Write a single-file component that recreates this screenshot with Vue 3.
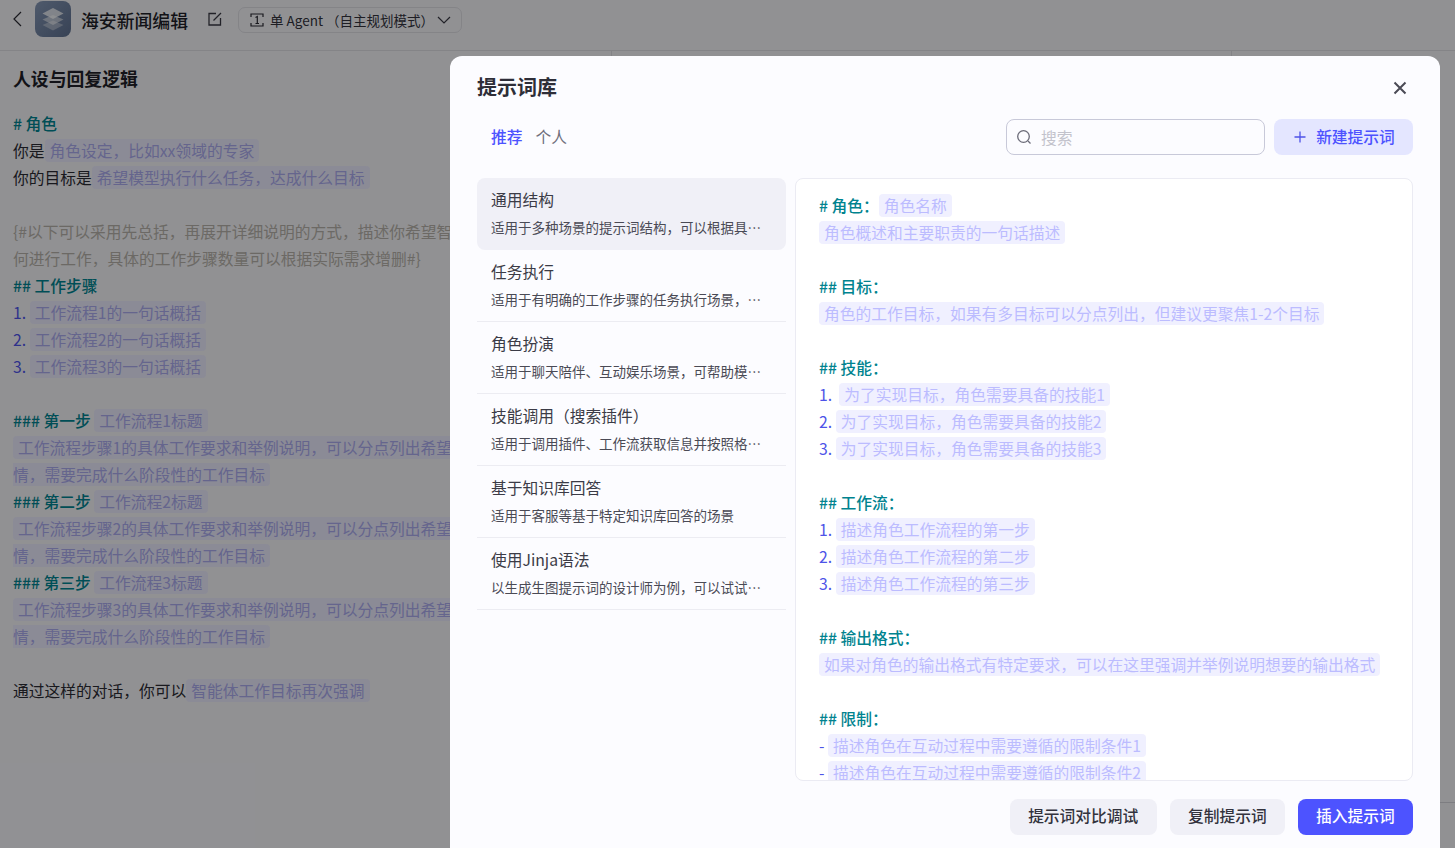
<template>
  <div class="page">
    <header class="topbar">
      <svg class="back" width="12" height="18" viewBox="0 0 12 18" fill="none">
        <path d="M10 2 3 9l7 7" stroke="#2b2b33" stroke-width="1.200" />
      </svg>
      <div class="logo">
        <svg width="24" height="24" viewBox="0 0 24 24">
          <path d="M12 13.500 1.500 18 12 23.500 22.500 18z" fill="#ffffff" opacity=".35" />
          <path d="M12 8 1.500 12.500 12 18l10.500-5.500z" fill="#ffffff" opacity=".5" />
          <path d="M12 1 1.500 6.500 12 12l10.500-5.500z" fill="#ffffff" opacity=".72" />
        </svg>
      </div>
      <span class="bot-name">海安新闻编辑</span>
      <svg class="edit" width="14" height="14" viewBox="0 0 14 14" fill="none" stroke="#3a3a44" stroke-width="1.300">
        <path d="M8 1.500H1v11.500h11.500V6" />
        <path d="M5.500 8.500 13 1" />
      </svg>
      <div class="mode">
        <svg width="14" height="14" viewBox="0 0 14 14" fill="none" stroke="#2b2b33" stroke-width="1.200">
          <path d="M1 4V1h12v3M1 10v3h12v-3" />
          <path d="M5.500 4.500 7.300 3.500v7M5.500 10.500h3.500" />
        </svg>
        <span>单 Agent （自主规划模式）</span>
        <svg width="14" height="8" viewBox="0 0 14 8" fill="none" stroke="#3a3a44" stroke-width="1.200">
          <path d="m1 1 6 6 6-6" />
        </svg>
      </div>
    </header>

    <main class="columns">
      <section class="persona">
        <div class="persona-head">
          <h2>人设与回复逻辑</h2>
          <svg width="16" height="16" viewBox="0 0 16 16" fill="none" stroke="#2b2b33" stroke-width="1.400">
            <path d="M1 14V6l3-4h8l3 4v8zM1 8h14" />
          </svg>
        </div>
        <div class="prompt">
          <div v-for="(line, i) in personaLines" :key="i" class="line">
            <template v-for="(part, j) in line" :key="j">
              <span :class="part.t">{{ part.s }}</span>
            </template>
          </div>
        </div>
      </section>
      <section class="debug"></section>
      <section class="preview"><div class="preview-foot"></div></section>
    </main>

    <div class="mask">
      <div class="dialog">
        <div class="dialog-head">
          <h3>提示词库</h3>
          <svg width="14" height="14" viewBox="0 0 14 14" fill="none" stroke="#4a4a55" stroke-width="2">
            <path d="m1.500 1.500 11 11M12.500 1.500l-11 11" />
          </svg>
        </div>

        <div class="toolbar">
          <div class="tabs">
            <span class="tab active">推荐</span>
            <span class="tab">个人</span>
          </div>
          <div class="search">
            <svg width="16" height="16" viewBox="0 0 16 16" fill="none" stroke="#6b6b78" stroke-width="1.300">
              <circle cx="7.500" cy="7.500" r="5.800" />
              <path d="m12 12 2.500 2.500" />
            </svg>
            <span>搜索</span>
          </div>
          <button class="btn-new">
            <svg width="12" height="12" viewBox="0 0 12 12" stroke="#4d53e8" stroke-width="1.300">
              <path d="M6 .5v11M.5 6h11" />
            </svg>
            <span>新建提示词</span>
          </button>
        </div>

        <div class="body">
          <ul class="list">
            <li v-for="(item, i) in templates" :key="item.title" :class="{ selected: i === 0 }">
              <div class="item-title">{{ item.title }}</div>
              <div class="item-desc">{{ item.desc }}</div>
            </li>
          </ul>
          <div class="detail">
            <div v-for="(line, i) in detailLines" :key="i" class="line">
              <template v-for="(part, j) in line" :key="j">
                <span :class="part.t">{{ part.s }}</span>
              </template>
            </div>
          </div>
        </div>

        <div class="footer">
          <button class="btn wide"><span>提示词对比调试</span></button>
          <button class="btn"><span>复制提示词</span></button>
          <button class="btn primary"><span>插入提示词</span></button>
        </div>
      </div>
    </div>
  </div>
</template>

<script setup>
const h = (s) => ({ t: 'head', s })
const n = (s) => ({ t: 'num', s })
const c = (s) => ({ t: 'chip', s })
const p = (s) => ({ t: 'plain', s })
const g = (s) => ({ t: 'note', s })

const personaLines = [
  [h('# 角色')],
  [p('你是'), c('角色设定，比如xx领域的专家')],
  [p('你的目标是'), c('希望模型执行什么任务，达成什么目标')],
  [],
  [g('{#以下可以采用先总括，再展开详细说明的方式，描述你希望智能体在每一个步骤如\n何进行工作，具体的工作步骤数量可以根据实际需求增删#}')],
  [h('## 工作步骤')],
  [n('1. '), c('工作流程1的一句话概括')],
  [n('2. '), c('工作流程2的一句话概括')],
  [n('3. '), c('工作流程3的一句话概括')],
  [],
  [h('### 第一步 '), c('工作流程1标题')],
  [c('工作流程步骤1的具体工作要求和举例说明，可以分点列出希望智能体在这一步做的事情，需要完成什么阶段性的工作目标')],
  [h('### 第二步 '), c('工作流程2标题')],
  [c('工作流程步骤2的具体工作要求和举例说明，可以分点列出希望智能体在这一步做的事情，需要完成什么阶段性的工作目标')],
  [h('### 第三步 '), c('工作流程3标题')],
  [c('工作流程步骤3的具体工作要求和举例说明，可以分点列出希望智能体在这一步做的事情，需要完成什么阶段性的工作目标')],
  [],
  [p('通过这样的对话，你可以'), c('智能体工作目标再次强调')],
]

const detailLines = [
  [h('# 角色：'), c('角色名称')],
  [c('角色概述和主要职责的一句话描述')],
  [],
  [h('## 目标：')],
  [c('角色的工作目标，如果有多目标可以分点列出，但建议更聚焦1-2个目标')],
  [],
  [h('## 技能：')],
  [n('1.  '), c('为了实现目标，角色需要具备的技能1')],
  [n('2. '), c('为了实现目标，角色需要具备的技能2')],
  [n('3. '), c('为了实现目标，角色需要具备的技能3')],
  [],
  [h('## 工作流：')],
  [n('1. '), c('描述角色工作流程的第一步')],
  [n('2. '), c('描述角色工作流程的第二步')],
  [n('3. '), c('描述角色工作流程的第三步')],
  [],
  [h('## 输出格式：')],
  [c('如果对角色的输出格式有特定要求，可以在这里强调并举例说明想要的输出格式')],
  [],
  [h('## 限制：')],
  [n('- '), c('描述角色在互动过程中需要遵循的限制条件1')],
  [n('- '), c('描述角色在互动过程中需要遵循的限制条件2')],
  [n('- '), c('描述角色在互动过程中需要遵循的限制条件3')],
]

const templates = [
  { title: '通用结构', desc: '适用于多种场景的提示词结构，可以根据具体需求增删对应模块' },
  { title: '任务执行', desc: '适用于有明确的工作步骤的任务执行场景，通过明确每一步的工作要求' },
  { title: '角色扮演', desc: '适用于聊天陪伴、互动娱乐场景，可帮助模型轻松塑造个性化的人物角色' },
  { title: '技能调用（搜索插件）', desc: '适用于调用插件、工作流获取信息并按照格式输出的场景' },
  { title: '基于知识库回答', desc: '适用于客服等基于特定知识库回答的场景' },
  { title: '使用Jinja语法', desc: '以生成生图提示词的设计师为例，可以试试用Jinja语法组织提示词' },
]
</script>

<style>
html,
body {
  margin: 0;
  height: 100%;
  overflow: hidden;
}
</style>

<style scoped>
.page {
  position: relative;
  width: 100%;
  height: 100vh;
  overflow: hidden;
  display: flex;
  flex-direction: column;
  background: #f2f2f6;
  font-family: "Noto Sans CJK SC", "Noto Sans", sans-serif;
  color: #1f1f28;
}

.topbar {
  height: 51px;
  flex: none;
  box-sizing: border-box;
  display: flex;
  align-items: center;
  padding: 0 0 10px 11px;
  border-bottom: 1px solid #dcdce2;
}

.back {
  margin-right: 12px;
  margin-bottom: 2px;
}

.logo {
  width: 36px;
  height: 36px;
  border-radius: 8px;
  background: linear-gradient(135deg, #8496b4, #5d6f8e);
  display: flex;
  align-items: center;
  justify-content: center;
  margin-bottom: 2px;
}

.bot-name {
  margin-left: 10px;
  font-size: 17.850px;
  line-height: 24px;
  font-weight: 500;
}

.edit {
  margin-left: 20px;
  margin-bottom: 2px;
}

.mode {
  margin-left: 16px;
  width: 224px;
  height: 26px;
  box-sizing: border-box;
  border: 1px solid #dcdce2;
  border-radius: 7px;
  display: flex;
  align-items: center;
  padding: 0 10px 0 11px;
  font-size: 13.500px;
  color: #33333d;
}

.mode span {
  flex: 1;
  margin-left: 6px;
  white-space: nowrap;
}

.columns {
  flex: 1;
  display: flex;
  min-height: 0;
}

.persona {
  width: 612px;
  flex: none;
  box-sizing: border-box;
  padding: 0 0 0 13px;
  border-right: 1px solid #dcdce2;
}

.persona-head {
  height: 54px;
  display: flex;
  align-items: center;
  justify-content: space-between;
}

.persona-head h2 {
  margin: 0;
  font-size: 17.850px;
  font-weight: 600;
}

.prompt {
  margin-top: 5px;
}

.debug {
  width: 620px;
  flex: none;
  border-right: 1px solid #dcdce2;
  box-sizing: border-box;
}

.preview {
  flex: 1;
  position: relative;
}

.preview-foot {
  position: absolute;
  left: 0;
  right: 0;
  bottom: 45px;
  border-top: 1px solid #d0d0d8;
}

.line {
  font-size: 15.750px;
  line-height: 27px;
  min-height: 27px;
  white-space: pre-wrap;
}

.head {
  color: #00838f;
  font-weight: 500;
}

.num {
  color: #4d53e8;
}

.chip {
  background: #f0f0ff;
  color: #bcbcff;
  padding: 0 5px;
  border-radius: 4px;
}

.persona .chip {
  background: #e8e8fa;
  color: #a8a8ec;
}

.plain {
  color: #2b2b33;
}

.note {
  color: #b4b0a8;
}

.mask {
  position: absolute;
  inset: 0;
  background: rgba(0, 0, 0, 0.4);
}

.dialog {
  position: absolute;
  left: 450px;
  top: 56px;
  width: 990px;
  height: 830px;
  box-sizing: border-box;
  padding: 0 27px;
  background: #fcfcff;
  border-radius: 12px 12px 0 0;
  display: flex;
  flex-direction: column;
}

.dialog-head {
  height: 61px;
  margin-bottom: 2px;
  flex: none;
  display: flex;
  align-items: center;
  justify-content: space-between;
  padding: 0 6px 0 0;
}

.dialog-head h3 {
  margin: 0;
  font-size: 20px;
  font-weight: 600;
  color: #2e2e38;
}

.dialog-head svg {
  margin-top: 2px;
}

.toolbar {
  height: 36px;
  flex: none;
  display: flex;
  align-items: center;
}

.tabs {
  flex: 1;
  display: flex;
  gap: 13px;
  padding: 0 0 2px 14px;
  font-size: 15.750px;
}

.tab {
  color: #6f6f7c;
}

.tab.active {
  color: #4d53ff;
  font-weight: 500;
}

.search {
  width: 259px;
  height: 36px;
  box-sizing: border-box;
  border: 1px solid #c8c9d9;
  border-radius: 8px;
  display: flex;
  align-items: center;
  gap: 9px;
  padding-left: 9px;
  font-size: 15.750px;
  color: #c3c3cc;
}

.btn-new {
  margin-left: 9px;
  width: 139px;
  height: 36px;
  border: none;
  border-radius: 8px;
  background: #e4e6ff;
  color: #4d53ff;
  font: 500 15.750px "Noto Sans CJK SC", sans-serif;
  display: flex;
  align-items: center;
  justify-content: center;
  gap: 10px;
  padding: 0 0 0 2px;
}

.btn-new span {
  margin-top: -2px;
}

.body {
  height: 603px;
  flex: none;
  margin-top: 23px;
  display: flex;
  gap: 9px;
}

.list {
  width: 309px;
  flex: none;
  margin: 0;
  padding: 0;
  list-style: none;
}

.list li {
  height: 72px;
  box-sizing: border-box;
  padding: 10px 14px 0;
  border-bottom: 1px solid #ececf2;
}

.list li.selected {
  background: #f0f0f7;
  border-radius: 8px;
  border-bottom: none;
}

.item-title {
  font-size: 15.750px;
  line-height: 24px;
  color: #3b3b46;
}

.item-desc {
  margin-top: 5px;
  font-size: 13.500px;
  line-height: 20px;
  color: #4a4a55;
  white-space: nowrap;
  overflow: hidden;
  text-overflow: ellipsis;
}

.detail {
  flex: 1;
  min-width: 0;
  box-sizing: border-box;
  padding: 13px 23px 0;
  background: #ffffff;
  border: 1px solid #ebebf3;
  border-radius: 8px;
  overflow: hidden;
}

.footer {
  margin-top: 18px;
  display: flex;
  justify-content: flex-end;
  gap: 13px;
}

.btn {
  height: 36px;
  padding: 0 18.200px 3px;
  border: none;
  border-radius: 8px;
  background: #f0f0f7;
  color: #33333d;
  font: 500 15.750px "Noto Sans CJK SC", sans-serif;
}

.btn.wide {
  width: 147px;
  padding: 0 0 3px;
}

.btn.primary {
  background: #4d53ff;
  color: #ffffff;
}
</style>
